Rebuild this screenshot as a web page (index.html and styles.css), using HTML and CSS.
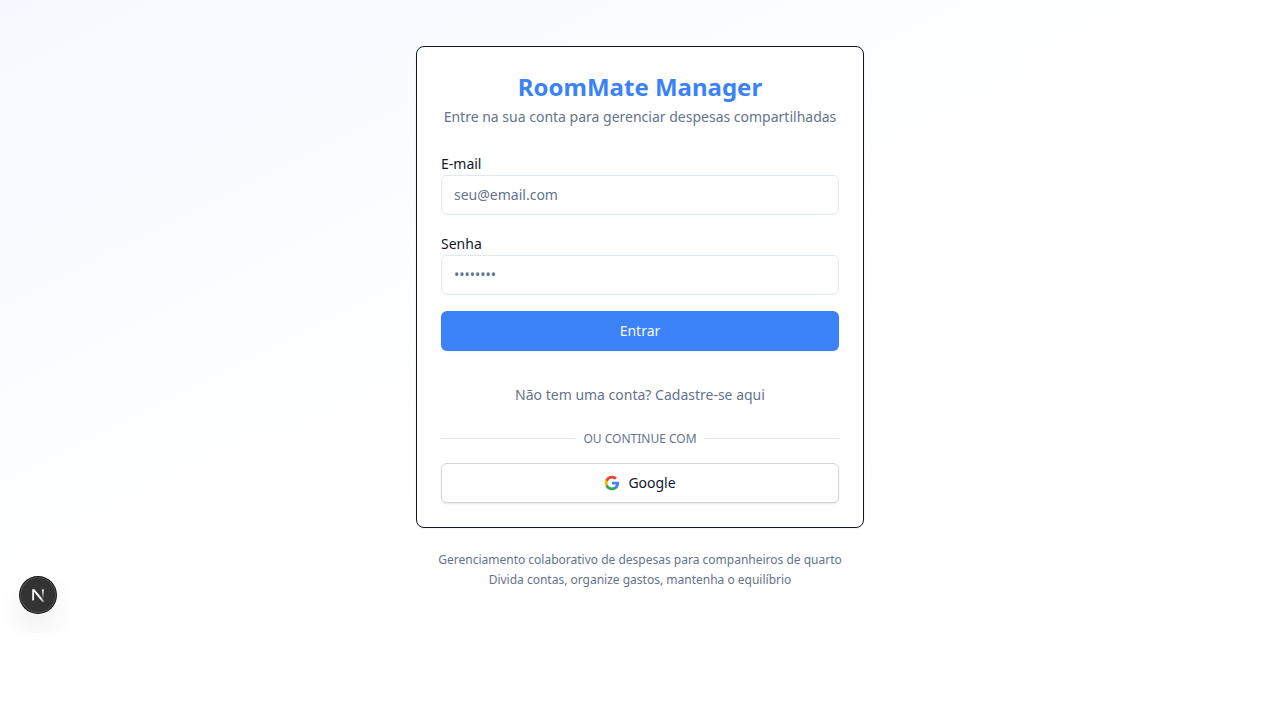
FILE: index.html
```html
<!DOCTYPE html>
<html lang="pt-BR">
<head>
  <meta charset="utf-8">
  <meta name="viewport" content="width=device-width, initial-scale=1">
  <title>RoomMate Manager</title>
  <link rel="stylesheet" href="styles.css">
</head>
<body>
  <main class="page">
    <div class="content">
      <section class="card">
        <header class="card-header">
          <h1 class="title">RoomMate Manager</h1>
          <p class="subtitle">Entre na sua conta para gerenciar despesas compartilhadas</p>
        </header>
        <form class="form">
          <div class="field">
            <label class="label" for="email">E-mail</label>
            <input class="input" id="email" type="email" placeholder="seu@email.com">
          </div>
          <div class="field">
            <label class="label" for="password">Senha</label>
            <input class="input" id="password" type="password" placeholder="••••••••">
          </div>
          <button class="button button-primary" type="submit">Entrar</button>
        </form>
        <div class="alternatives">
          <a class="signup" href="#cadastro">Não tem uma conta? Cadastre-se aqui</a>
          <div class="divider"><span>Ou continue com</span></div>
          <button class="button button-outline" type="button">
            <svg class="google" viewBox="0 0 24 24" aria-hidden="true">
              <path fill="#4285F4" d="M22.56 12.25c0-.78-.07-1.53-.2-2.25H12v4.26h5.92c-.26 1.37-1.04 2.53-2.21 3.31v2.77h3.57c2.08-1.92 3.28-4.74 3.28-8.09z"/>
              <path fill="#34A853" d="M12 23c2.97 0 5.46-.98 7.28-2.66l-3.57-2.77c-.98.66-2.23 1.06-3.71 1.06-2.86 0-5.29-1.93-6.16-4.53H2.18v2.84C3.99 20.53 7.7 23 12 23z"/>
              <path fill="#FBBC05" d="M5.84 14.09c-.22-.66-.35-1.36-.35-2.09s.13-1.43.35-2.09V7.07H2.18C1.43 8.55 1 10.22 1 12s.43 3.45 1.18 4.93l3.66-2.84z"/>
              <path fill="#EA4335" d="M12 5.38c1.62 0 3.06.56 4.21 1.64l3.15-3.15C17.45 2.09 14.97 1 12 1 7.7 1 3.99 3.47 2.18 7.07l3.66 2.84c.87-2.6 3.3-4.53 6.16-4.53z"/>
            </svg>
            Google
          </button>
        </div>
      </section>
      <footer class="footer">
        <p>Gerenciamento colaborativo de despesas para companheiros de quarto</p>
        <p>Divida contas, organize gastos, mantenha o equilíbrio</p>
      </footer>
    </div>
    <button class="dev-badge" type="button" aria-label="Next.js">
      <svg viewBox="0 0 40 40" fill="none" aria-hidden="true">
        <defs>
          <linearGradient id="diagonal" x1="20" y1="20" x2="27" y2="29" gradientUnits="userSpaceOnUse">
            <stop stop-color="#fff"/>
            <stop offset="0.4" stop-color="#fff"/>
            <stop offset="1" stop-color="#fff" stop-opacity="0.2"/>
          </linearGradient>
          <linearGradient id="stem" x1="25" y1="14" x2="25" y2="24" gradientUnits="userSpaceOnUse">
            <stop stop-color="#fff"/>
            <stop offset="1" stop-color="#fff" stop-opacity="0"/>
          </linearGradient>
        </defs>
        <path d="M14.6 13.8V26" stroke="#fff" stroke-width="2"/>
        <path d="M13.6 13.8H16.3L27 27L25.2 28.4Z" fill="url(#diagonal)"/>
        <path d="M25.4 13.8V24" stroke="url(#stem)" stroke-width="2"/>
      </svg>
    </button>
  </main>
</body>
</html>
```
FILE: styles.css
```css
* {
  box-sizing: border-box;
}

body,
h1,
p {
  margin: 0;
}

body {
  background: #fff;
  color: #0f172a;
  font-family: "Noto Sans", sans-serif;
  font-size: 14px;
  line-height: 20px;
}

button,
input {
  font: inherit;
}

.page {
  position: relative;
  display: flex;
  justify-content: center;
  overflow: hidden;
  padding: 46px 16px 45px;
  background: linear-gradient(to bottom right, #f5f9ff, #fff 50%, #fefefe);
}

.content {
  width: 100%;
  max-width: 448px;
}

.card {
  padding: 24px;
  border: 1px solid #0f172a;
  border-radius: 8px;
  background: #fff;
  box-shadow: 0 1px 2px rgb(0 0 0 / 5%);
}

.card-header {
  display: flex;
  flex-direction: column;
  gap: 4px;
  padding-bottom: 24px;
  text-align: center;
}

.title {
  color: #3b82f6;
  font-size: 24px;
  font-weight: 700;
  line-height: 32px;
}

.subtitle {
  color: #64748b;
}

.form {
  display: flex;
  flex-direction: column;
  gap: 16px;
}

.label {
  display: block;
  padding: 3px 0 1px;
}

.input {
  display: block;
  width: 100%;
  height: 40px;
  padding: 8px 12px 10px;
  border: 1px solid #e2e8f0;
  border-radius: 6px;
  background: #fff;
  color: #0f172a;
}

.input::placeholder {
  color: #64748b;
}

.button {
  display: flex;
  align-items: center;
  justify-content: center;
  gap: 8px;
  width: 100%;
  height: 40px;
  padding: 8px 16px;
  border: 0;
  border-radius: 6px;
  box-shadow: 0 1px 2px rgb(0 0 0 / 5%);
  cursor: pointer;
}

.button-primary {
  background: #3b82f6;
  color: #f8fafc;
}

.button-outline {
  border: 1px solid #d1d5db;
  background: #fff;
  color: #0f172a;
  box-shadow: 0 1px 2px rgb(0 0 0 / 10%);
}

.google {
  width: 16px;
  height: 16px;
}

.alternatives {
  display: flex;
  flex-direction: column;
  gap: 16px;
  padding-top: 24px;
}

.signup {
  padding: 10px 16px;
  color: #64748b;
  text-align: center;
  text-decoration: none;
}

.divider {
  display: flex;
  align-items: center;
  gap: 8px;
  color: #64748b;
  font-size: 12px;
  line-height: 16px;
  text-transform: uppercase;
}

.divider::before,
.divider::after {
  content: "";
  flex: 1;
  height: 2px;
  border-top: 1px solid #e5e7eb;
}

.footer {
  display: flex;
  flex-direction: column;
  gap: 4px;
  margin-top: 24px;
  color: #64748b;
  font-size: 12px;
  line-height: 16px;
  text-align: center;
}

.dev-badge {
  position: absolute;
  bottom: 20px;
  left: 20px;
  width: 36px;
  height: 36px;
  padding: 0;
  border: 0;
  border-radius: 50%;
  background: #333;
  box-shadow: 0 0 0 1px #171717, inset 0 0 0 1px rgb(255 255 255 / 14%), 0 16px 32px -8px rgb(0 0 0 / 24%);
}

.dev-badge svg {
  display: block;
  width: 36px;
  height: 36px;
}
```
